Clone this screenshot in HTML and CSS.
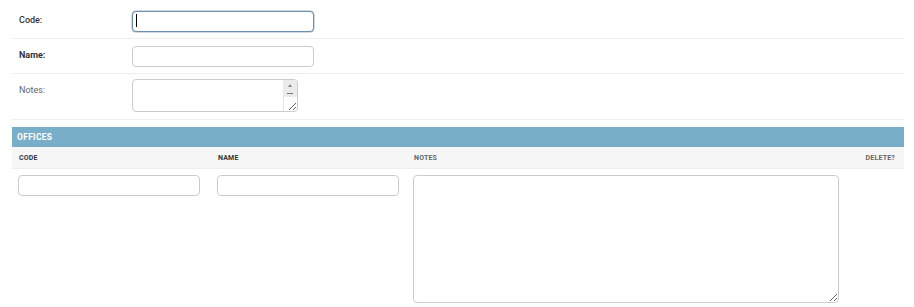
FILE: index.html
```html
<!DOCTYPE html>
<html>
<head>
<meta charset="utf-8">
<link rel="stylesheet" href="styles.css">
</head>
<body>
<div class="page">
  <fieldset class="module">
    <div class="form-row">
      <label class="lbl lbl-code">Code:</label>
      <span class="caret-wrap"><input type="text" class="vText focused"></span>
    </div>
    <div class="form-row">
      <label class="lbl lbl-required">Name:</label>
      <input type="text" class="vText">
    </div>
    <div class="form-row form-row-notes">
      <label class="lbl lbl-optional">Notes:</label>
      <span class="ta-wrap">
        <textarea class="small-ta"></textarea>
        <span class="sb-top"><span class="sb-arrow"></span><span class="sb-dash"></span></span>
        <span class="sb-bottom"></span>
      </span>
    </div>
  </fieldset>

  <div class="inline-group">
    <div class="inline-title">OFFICES</div>
    <div class="inline-head">
      <div class="th th-required">CODE</div>
      <div class="th th-required">NAME</div>
      <div class="th">NOTES</div>
      <div class="th th-delete">DELETE?</div>
    </div>
    <div class="inline-row">
      <div class="td"><input type="text" class="cell-input"></div>
      <div class="td"><input type="text" class="cell-input"></div>
      <div class="td"><textarea class="big-ta"></textarea></div>
      <div class="td"></div>
    </div>
  </div>
</div>
</body>
</html>
```

FILE: styles.css
```css
* { box-sizing: border-box; }
html, body {
  margin: 0;
  padding: 0;
  background: #fff;
  font-family: Roboto, "Liberation Sans", sans-serif;
  color: #333;
}
.page {
  padding: 4px 10px 0 12px;
}
.module {
  margin: 0;
  padding: 0;
  border: 0;
}
.form-row {
  display: flex;
  align-items: flex-start;
  padding: 7px 7px 6px;
  border-bottom: 1px solid #eee;
}
.form-row-notes {
  padding: 5px 7px 7px;
}
.lbl {
  width: 113px;
  flex: none;
  font-size: 9px;
  line-height: 12px;
  padding-top: 3px;
  color: #333;
}
.lbl-code { font-weight: 500; }
.lbl-required { font-weight: 700; }
.lbl-optional { color: #666; padding-top: 5px; }

.caret-wrap {
  position: relative;
  display: block;
  line-height: 0;
}
.caret-wrap::after {
  content: "";
  position: absolute;
  left: 4px;
  top: 3px;
  width: 1px;
  height: 13px;
  background: #000;
}
.vText {
  display: block;
  width: 182px;
  height: 21px;
  margin: 0;
  padding: 2px 5px;
  border: 1px solid #ccc;
  border-radius: 4px;
  background: #fff;
  font-family: inherit;
  font-size: 10px;
  outline: none;
}
.vText.focused {
  border-color: #6f8fae;
  box-shadow: 0 0 0 0.5px #9fb6cc;
}
.ta-wrap {
  position: relative;
  display: block;
  line-height: 0;
}
.small-ta {
  display: block;
  width: 166px;
  height: 33px;
  margin: 0;
  padding: 2px 5px;
  border: 1px solid #ccc;
  border-radius: 4px;
  font-family: inherit;
  font-size: 10px;
  overflow: hidden;
  resize: both;
  outline: none;
}
.sb-top {
  position: absolute;
  right: 1px;
  top: 1px;
  width: 14px;
  height: 17px;
  background: #ebebeb;
  border-top-right-radius: 3px;
}
.sb-arrow {
  position: absolute;
  left: 5px;
  top: 4px;
  width: 0;
  height: 0;
  border-left: 2px solid transparent;
  border-right: 2px solid transparent;
  border-bottom: 3px solid #888;
}
.sb-dash {
  position: absolute;
  left: 4px;
  top: 13px;
  width: 6px;
  height: 1px;
  background: #777;
}
.sb-bottom {
  position: absolute;
  right: 1px;
  top: 18px;
  width: 14px;
  height: 14px;
  border-left: 1px solid #e2e2e2;
}

.inline-group {
  margin-top: 7px;
}
.inline-title {
  height: 20px;
  background: #79aec8;
  color: #fff;
  font-size: 8.5px;
  font-weight: 700;
  line-height: 20px;
  padding-left: 5px;
  letter-spacing: 0.3px;
}
.inline-head,
.inline-row {
  display: grid;
  grid-template-columns: 199px 196px 1fr 60px;
}
.inline-head {
  background: #f6f6f6;
  border-bottom: 1px solid #eee;
  height: 22px;
  align-items: center;
  padding-top: 1px;
}
.th {
  font-size: 7px;
  font-weight: 700;
  color: #666;
  padding-left: 7px;
  letter-spacing: 0.2px;
}
.th-required { color: #333; }
.th-delete {
  text-align: right;
  padding-left: 0;
  padding-right: 9px;
}
.inline-row {
  padding-top: 6px;
}
.td {
  padding-left: 6px;
}
.cell-input {
  display: block;
  width: 182px;
  height: 21px;
  margin: 0;
  padding: 2px 5px;
  border: 1px solid #ccc;
  border-radius: 4px;
  font-family: inherit;
  font-size: 10px;
  outline: none;
}
.big-ta {
  display: block;
  width: 426px;
  height: 128px;
  margin: 0;
  padding: 2px 5px;
  border: 1px solid #ccc;
  border-radius: 4px;
  font-family: inherit;
  font-size: 10px;
  outline: none;
}
```
